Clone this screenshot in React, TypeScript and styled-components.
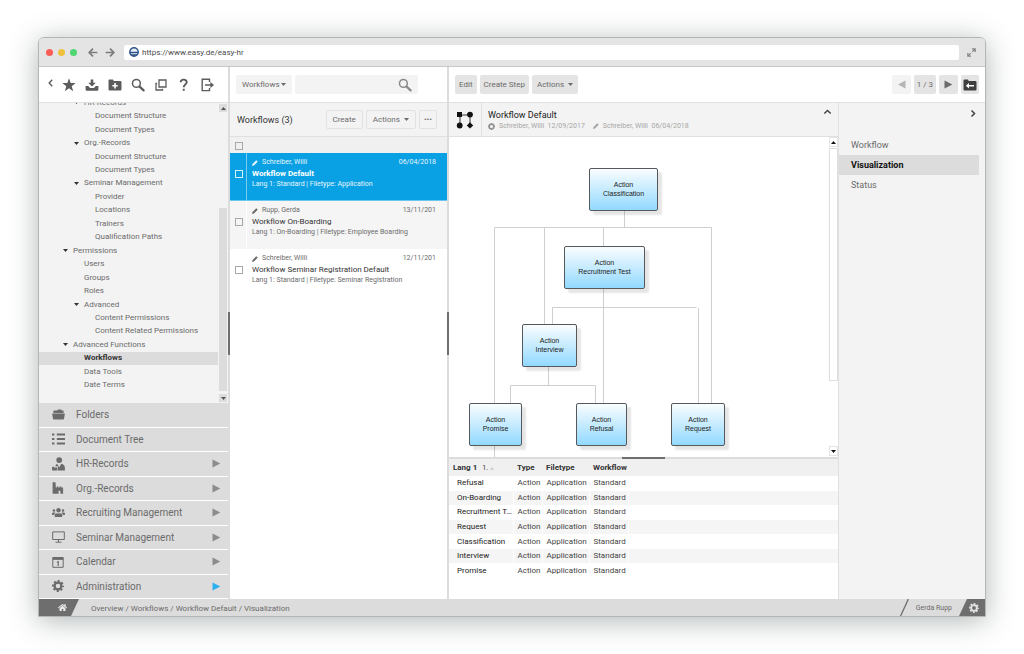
import React from "react";
import styled, { createGlobalStyle, css } from "styled-components";
import { FaUsers, FaHome } from "react-icons/fa";

const Global = createGlobalStyle`
  *, *::before, *::after { box-sizing: border-box; }
  body { margin: 0; background: #fff; color: #6b6b6b; font-family: Roboto, "Liberation Sans", sans-serif; font-size: 8px; }
  button, input, select { font: inherit; color: inherit; margin: 0; padding: 0; border: 0; background: none; border-radius: 0; }
  button, select { cursor: pointer; }
  ul { list-style: none; margin: 0; padding: 0; }
  h1, h2, p { margin: 0; font-weight: 400; }
  a { color: inherit; text-decoration: none; }
  svg { display: block; flex: none; }
`;

const c = {
  line: "#e0e0e0",
  panel: "#f3f3f3",
  grey: "#dcdcdc",
  dark: "#6e6e6e",
  icon: "#5c5c5c",
  blue: "#0aa1e4",
};

/* ---------- icons ---------- */

type IconProps = { size?: number };

const Gear = ({ size = 12 }: IconProps) => (
  <svg width={size} height={size} viewBox="0 0 12 12" fill="none" stroke="currentColor">
    <circle cx="6" cy="6" r="3.4" strokeWidth="2.200" />
    <circle cx="6" cy="6" r="5" strokeWidth="1.900" strokeDasharray="2.127 1.800" strokeDashoffset="1.060" />
  </svg>
);
const Star = () => (
  <svg width="14" height="14" viewBox="0 0 14 14" fill="currentColor">
    <path d="M7 .3l1.700 4.700 5 .1-4 3.100 1.500 5L7 10.300l-4.200 2.900 1.500-5-4-3.100 5-.1z" />
  </svg>
);
const Tray = () => (
  <svg width="14" height="14" viewBox="0 0 14 14" fill="currentColor">
    <path d="M5.700 1.500h2.600v3.300h2.500L7 8.600 3.200 4.800h2.500z" />
    <path d="M.6 8h2.600l1.900 2h3.800l1.900-2h2.600v3.600q0 1.200-1.200 1.200H1.800Q.6 12.800.6 11.600z" />
  </svg>
);
const FolderPlus = () => (
  <svg width="14" height="14" viewBox="0 0 14 14">
    <path d="M.5 2.500q0-.9.9-.9h3.200q.9 0 .9.9v.4h6.900q1.100 0 1.100 1v7.500q0 1-1 1H1.500q-1 0-1-1z" fill="currentColor" />
    <path d="M7 5v5.400M4.300 7.700h5.400" stroke="#fff" strokeWidth="1.600" />
  </svg>
);
const FolderBack = () => (
  <svg width="14" height="14" viewBox="0 0 14 14">
    <path d="M.5 2.500q0-.9.9-.9h3.200q.9 0 .9.9v.4h6.900q1.100 0 1.100 1v7.500q0 1-1 1H1.500q-1 0-1-1z" fill="#3f3f3f" />
    <path d="M2.800 7.700L6 5v1.900h5v1.600H6v1.900z" fill="#fff" />
  </svg>
);
const Magnifier = ({ size = 14 }: IconProps) => (
  <svg width={size} height={size} viewBox="0 0 14 14" fill="none" stroke="currentColor">
    <circle cx="5.400" cy="5.400" r="3.900" strokeWidth="1.500" />
    <path d="M8.400 8.400l4.200 4" strokeWidth="2.200" strokeLinecap="round" />
  </svg>
);
const Windows = () => (
  <svg width="14" height="14" viewBox="0 0 14 14" fill="none" stroke="currentColor" strokeWidth="1.300">
    <path d="M5 2h7v7H5z" />
    <path d="M3.200 5.500H2V12h6.500v-1.200" />
  </svg>
);
const Question = () => (
  <svg width="14" height="14" viewBox="0 0 14 14" fill="none" stroke="currentColor" strokeWidth="1.900">
    <path d="M3.600 4.300c.2-3.600 6.100-3.400 6.100 0C9.700 6.500 6.700 6.500 6.700 9.200" />
    <path d="M5.700 10.800h2v2h-2z" fill="currentColor" stroke="none" />
  </svg>
);
const Exit = () => (
  <svg width="14" height="14" viewBox="0 0 14 14" fill="none" stroke="currentColor" strokeWidth="1.400">
    <path d="M9.500 4V1.200H2.200v11.400h7.300V10" />
    <path d="M5 7h6" strokeWidth="1.700" />
    <path d="M10.400 4L14 7l-3.600 3z" fill="currentColor" stroke="none" />
  </svg>
);
const ChevronLeft = () => (
  <svg width="6" height="12" viewBox="0 0 6 12" fill="none" stroke="currentColor" strokeWidth="1.400"><path d="M5.200.8L2.200 4l3 3.200" /></svg>
);
const ChevronRight = () => (
  <svg width="6" height="9" viewBox="0 0 6 9" fill="none" stroke="currentColor" strokeWidth="1.500"><path d="M1.500 1.500l3 3-3 3" /></svg>
);
const ChevronUp = () => (
  <svg width="9" height="6" viewBox="0 0 9 6" fill="none" stroke="currentColor" strokeWidth="1.500"><path d="M1.300 4.500l3.200-3 3.200 3" /></svg>
);
const Arrow = ({ back }: { back?: boolean }) => (
  <svg width="10" height="9" viewBox="0 0 10 9" fill="none" stroke="#7c7c7c" strokeWidth="1.700">
    <path d={back ? "M9.400 4.500H1.500M5 .6L1.200 4.500 5 8.400" : "M.6 4.500h7.900M5 .6l3.800 3.900L5 8.400"} />
  </svg>
);
const Expand = () => (
  <svg width="9" height="9" viewBox="0 0 9 9" fill="none" stroke="#858585" strokeWidth="1.200"><path d="M5 .8h3.200V4M8.200.8L5.200 3.800M4 8.200H.8V5M.8 8.200l3-3" /></svg>
);
const SiteLogo = () => (
  <svg width="10" height="10" viewBox="0 0 10 10">
    <circle cx="5" cy="5" r="4.200" fill="#e8eef6" stroke="#2f5488" strokeWidth="1.400" />
    <path d="M.4 4.800h9.200v1.400H.4zM1.400 7.200h7.200A4.400 4.400 0 0 1 1.400 7.200z" fill="#2f5488" />
  </svg>
);
const Caret = ({ up, size = 5 }: { up?: boolean; size?: number }) => (
  <svg width={size} height="3" viewBox="0 0 5 3" fill="currentColor"><path d={up ? "M0 3L2.500 0 5 3z" : "M0 0h5L2.500 3z"} /></svg>
);
const Play = ({ back, size = 9 }: { back?: boolean; size?: number }) => (
  <svg width={size} height={size} viewBox="0 0 9 9" fill="currentColor"><path d={back ? "M8.500.5v8L1 4.500z" : "M.5.5v8L8.300 4.500z"} /></svg>
);
const Pencil = () => (
  <svg width="6" height="6" viewBox="0 0 6 6" fill="currentColor"><path d="M0 6l.5-1.900L4 .6q.4-.4.800 0l.6.600q.4.400 0 .8L1.900 5.500z" /></svg>
);
const FolderOpen = () => (
  <svg width="13" height="11" viewBox="0 0 13 11" fill="currentColor">
    <path d="M1.400 4V2q0-.6.6-.6h3L6 .5h3q.6 0 .7.700l.1.400h1.300q.5 0 .5.600V4z" />
    <path d="M.1 4.600h12.800l-.9 5.200q-.1.700-.8.700H1.800q-.7 0-.8-.7z" />
  </svg>
);
const ListIcon = () => (
  <svg width="13" height="12" viewBox="0 0 13 12" fill="currentColor">
    <path d="M0 .5h2.400v2H0zM0 5h2.400v2H0zM0 9.500h2.400v2H0zM4.800.5H13v2H4.800zM4.800 5H13v2H4.800zM4.800 9.500H13v2H4.800z" />
  </svg>
);
const PersonFile = () => (
  <svg width="13" height="14" viewBox="0 0 13 14" fill="currentColor">
    <circle cx="7.200" cy="3.100" r="2.900" />
    <path d="M5.200 6.800l2 3.600 2-3.600q3.700.8 3.700 4v2.700H5.800V9.300H3.200Q3.700 7.300 5.200 6.800z" />
    <path d="M.1 9.800h1.700l.5.700h2.900v3H.1z" />
  </svg>
);
const Factory = () => (
  <svg width="12" height="12" viewBox="0 0 12 12" fill="currentColor">
    <path d="M.6.2h2.900l.3 5.200h1V4.400h1.600v1h1.300v-1h1.500v1h1.900v6.400H8.400V8.800H6.600v3h-6z" />
  </svg>
);
const MonitorIcon = () => (
  <svg width="13" height="12" viewBox="0 0 13 12" fill="none" stroke="currentColor"><path d="M.7.900h11.600v7.600H.7zM6.500 8.500v2.500M3.500 11.200h6" /></svg>
);
const CalendarIcon = () => (
  <svg width="12" height="12" viewBox="0 0 12 12" fill="none" stroke="currentColor">
    <path d="M.8 1.500h10.400v9.800H.8z" />
    <path d="M.8 2.600h10.400" strokeWidth="2.600" />
    <path d="M4.900 6.300l1.300-.6v4.200" strokeWidth="1.200" />
  </svg>
);
const WorkflowIcon = () => (
  <svg width="18" height="18" viewBox="0 0 18 18" fill="#111">
    <path d="M4 4h10M4 4v10M14 4v10" stroke="#333" strokeWidth="1" />
    <path d="M1 1h5v5H1z" />
    <circle cx="14" cy="3.600" r="2.900" />
    <circle cx="3.700" cy="14.500" r="2.900" />
    <path d="M14 11.200l3.200 3.200-3.200 3.200-3.200-3.200z" />
  </svg>
);
const PlusDot = () => (
  <svg width="7" height="7" viewBox="0 0 7 7"><circle cx="3.500" cy="3.500" r="2.400" fill="none" stroke="#929292" strokeWidth="1.600" /><path d="M3.500 0v1.500M3.500 5.500V7M0 3.500h1.500M5.500 3.500H7" stroke="#929292" strokeWidth="1" /></svg>
);

/* ---------- frame ---------- */

const Page = styled.div`
  display: flex;
  min-height: 100vh;
  padding: 37px 38px;
`;
const Frame = styled.div`
  flex: 1;
  min-width: 0;
  display: flex;
  flex-direction: column;
  overflow: hidden;
  background: #fff;
  border: 1px solid #b3b5b5;
  border-radius: 6px 6px 0 0;
  box-shadow: 0 4px 28px rgba(70, 82, 82, 0.42);
`;
const TitleBar = styled.header`
  flex: none;
  display: flex;
  align-items: center;
  height: 29px;
  padding: 0 9px 0 7px;
  background: #e4e4e4;
  border-bottom: 1px solid #c8c8c8;
`;
const Dots = styled.div`
  display: flex;
  gap: 5px;
  margin-right: 11px;
`;
const Dot = styled.span<{ $color: string }>`
  width: 7px;
  height: 7px;
  border-radius: 50%;
  background: ${(p) => p.$color};
`;
const History = styled.div`
  display: flex;
  gap: 7px;
  margin-right: 9px;
`;
const Address = styled.label`
  flex: 1;
  display: flex;
  align-items: center;
  gap: 3px;
  height: 15px;
  padding: 0 5px;
  margin-right: 8px;
  border-radius: 2px;
  background: #fff;
`;
const AddressInput = styled.input`
  flex: 1;
  min-width: 0;
  color: #4a4a4a;
  outline: none;
`;
const IconButton = styled.button`
  display: inline-flex;
  align-items: center;
  justify-content: center;
  color: ${c.icon};
`;
const Columns = styled.div`
  flex: 1;
  min-height: 0;
  display: grid;
  grid-template-columns: 189px 2px 217px 2px minmax(0, 1fr);
`;
const Splitter = styled.div<{ $across?: boolean }>`
  display: flex;
  justify-content: center;
  align-items: center;
  background: ${c.grey};
  &::before {
    content: "";
    background: ${c.dark};
    width: ${(p) => (p.$across ? "43px" : "2px")};
    height: ${(p) => (p.$across ? "2px" : "43px")};
  }
`;
const Column = styled.section`
  display: flex;
  flex-direction: column;
  min-width: 0;
  min-height: 0;
  background: #fff;
`;
const Toolbar = styled.div<{ $gap?: number; $pad?: string }>`
  flex: none;
  display: flex;
  align-items: center;
  gap: ${(p) => p.$gap ?? 3}px;
  height: 36px;
  padding: ${(p) => p.$pad ?? "0 6px"};
  border-bottom: 1px solid ${c.line};
`;

/* ---------- sidebar ---------- */

const Tree = styled.div`
  flex: 1;
  min-height: 0;
  display: flex;
  overflow: hidden;
  background: ${c.panel};
`;
const TreeList = styled.ul`
  flex: 1;
  height: 296px;
  margin-top: -7px;
  display: grid;
  grid-auto-rows: 1fr;
`;
const TreeItem = styled.li<{ $level: number; $on?: boolean }>`
  display: flex;
  align-items: center;
  gap: 5px;
  padding-left: ${(p) => 24 + p.$level * 11}px;
  line-height: 12px;
  white-space: nowrap;
  ${(p) => p.$on && css`background: ${c.grey}; color: #333; font-weight: 700;`}
`;
const Twist = styled.span`
  width: 5px;
  color: #333;
`;
const TreeScroll = styled.div`
  flex: none;
  display: flex;
  flex-direction: column;
  justify-content: space-between;
  width: 10px;
  padding: 1px 1px;
`;
const ScrollButton = styled.button<{ $light?: boolean }>`
  display: flex;
  align-items: center;
  justify-content: center;
  height: ${(p) => (p.$light ? 10 : 8)}px;
  color: ${(p) => (p.$light ? "#111" : "#555")};
  background: ${(p) => (p.$light ? "#fff" : c.grey)};
  border: ${(p) => (p.$light ? "1px solid #e4e4e4" : "0")};
`;
const TreeThumb = styled.div`
  height: 183px;
  margin: auto 0 3px;
  background: ${c.grey};
`;
const Nav = styled.nav`
  flex: 0 0 196px;
  display: flex;
  flex-direction: column;
`;
const NavItem = styled.button<{ $on?: boolean }>`
  flex: 1;
  display: flex;
  align-items: center;
  padding: 0 7px 0 12px;
  background: ${c.grey};
  border-bottom: 1px solid #fff;
  font-size: 10px;
  text-align: left;
  & > svg:last-child { color: ${(p) => (p.$on ? "#2fb0ee" : "#8c8c8c")}; }
`;
const NavIcon = styled.span`
  display: flex;
  justify-content: center;
  width: 14px;
  margin-right: 11px;
`;
const NavLabel = styled.span`
  flex: 1;
`;

/* ---------- list ---------- */

const Scope = styled.label`
  position: relative;
  display: flex;
  align-items: center;
  color: #6b6b6b;
  & > svg { position: absolute; right: 6px; pointer-events: none; }
`;
const ScopeSelect = styled.select`
  appearance: none;
  width: 56px;
  height: 19px;
  padding: 0 6px;
  border-radius: 2px;
  background: ${c.panel};
`;
const Search = styled.label`
  display: flex;
  align-items: center;
  width: 123px;
  height: 19px;
  padding: 0 6px;
  border-radius: 2px;
  background: ${c.panel};
  color: #8a8a8a;
`;
const SearchInput = styled.input`
  flex: 1;
  min-width: 0;
  outline: none;
`;
const ListHead = styled.div`
  flex: none;
  display: flex;
  align-items: center;
  gap: 3px;
  height: 34px;
  padding: 0 10px 0 7px;
  background: ${c.panel};
  border-bottom: 1px solid ${c.line};
`;
const Heading = styled.h2`
  flex: 1;
  font-size: 9px;
  color: #333;
  white-space: nowrap;
`;
const Button = styled.button<{ $outline?: boolean; $faint?: boolean; $pad?: number }>`
  display: inline-flex;
  align-items: center;
  justify-content: center;
  gap: 4px;
  height: 19px;
  padding: 0 ${(p) => p.$pad ?? 5}px;
  border-radius: 2px;
  white-space: nowrap;
  background: ${(p) => (p.$outline || p.$faint ? c.panel : "#e4e4e4")};
  border: ${(p) => (p.$outline ? "1px solid #e2e2e2" : "0")};
  color: ${(p) => (p.$faint ? "#b4b4b4" : "#6b6b6b")};
`;
const SelectAll = styled.div`
  flex: none;
  display: flex;
  align-items: center;
  height: 16px;
  padding: 1px 5px 0;
  background: #f0f0f0;
`;
const Check = styled.input<{ $light?: boolean }>`
  appearance: none;
  flex: none;
  width: 8px;
  height: 8px;
  border: 1px solid ${(p) => (p.$light ? "#d5effb" : "#a8a8a8")};
`;
const Row = styled.li<{ $on?: boolean; $alt?: boolean }>`
  display: flex;
  min-height: 48px;
  font-size: 7px;
  line-height: 11px;
  background: ${(p) => (p.$on ? c.blue : p.$alt ? "#f5f5f5" : "#fff")};
  color: ${(p) => (p.$on ? "#e6f6fd" : "#6b6b6b")};
  border-bottom: 1px solid ${(p) => (p.$on ? "#6cc7ef" : "transparent")};
`;
const RowCheck = styled.div<{ $on?: boolean }>`
  flex: none;
  width: 17px;
  padding: 17px 0 0 5px;
  border-right: 1px solid ${(p) => (p.$on ? "#7accf1" : "#fff")};
`;
const RowBody = styled.div`
  flex: 1;
  min-width: 0;
  padding: 4px 11px 0 5px;
  white-space: nowrap;
`;
const RowMeta = styled.div`
  display: flex;
  align-items: center;
  gap: 4px;
  & > :last-child { margin-left: auto; }
`;
const RowTitle = styled.h2<{ $on?: boolean }>`
  font-size: 8px;
  color: ${(p) => (p.$on ? "#fff" : "#333")};
  font-weight: ${(p) => (p.$on ? 700 : 400)};
`;

/* ---------- detail ---------- */

const Spacer = styled.span`
  flex: 1;
`;
const Detail = styled.div`
  flex: 1;
  min-height: 0;
  display: flex;
`;
const Main = styled.div`
  flex: 1;
  min-width: 0;
  display: flex;
  flex-direction: column;
`;
const DetailHead = styled.div`
  flex: none;
  display: flex;
  height: 34px;
  background: ${c.panel};
  border-bottom: 1px solid ${c.line};
`;
const HeadIcon = styled.div`
  display: flex;
  align-items: center;
  justify-content: center;
  width: 33px;
  border-right: 1px solid ${c.line};
`;
const HeadText = styled.div`
  flex: 1;
  padding: 6px 6px 0;
`;
const HeadTitle = styled.h1`
  font-size: 9px;
  line-height: 12px;
  color: #222;
`;
const HeadMeta = styled.p`
  display: flex;
  align-items: center;
  gap: 4px;
  font-size: 7px;
  line-height: 10px;
  color: #a6a6a6;
  & > span { margin-right: 4px; }
`;
const HeadToggle = styled(IconButton)`
  align-self: flex-start;
  padding: 6px;
  color: #444;
`;
const Canvas = styled.div`
  position: relative;
  flex: 1;
  min-height: 320px;
  overflow: hidden;
  display: flex;
  justify-content: flex-end;
`;
const Edges = styled.svg`
  position: absolute;
  left: 0;
  top: 0;
`;
const Node = styled.div<{ $x: number; $y: number; $w: number }>`
  position: absolute;
  left: ${(p) => p.$x}px;
  top: ${(p) => p.$y}px;
  width: ${(p) => p.$w}px;
  height: 43px;
  display: flex;
  flex-direction: column;
  justify-content: center;
  padding-bottom: 2px;
  text-align: center;
  font: 7px/9px "Liberation Sans", Arial, sans-serif;
  color: #222;
  background: linear-gradient(#fafdff, #92d9ff);
  border: 1px solid #55595c;
  border-radius: 2px;
  box-shadow: 4px 4px 2px rgba(0, 0, 0, 0.1);
`;
const CanvasScroll = styled.div`
  display: flex;
  flex-direction: column;
  width: 9px;
  padding-bottom: 1px;
`;
const CanvasThumb = styled.div`
  height: 233px;
  margin: 1px 0 auto;
  background: #fff;
  border: 1px solid #dedede;
`;
const Steps = styled.table`
  flex: none;
  width: 100%;
  height: 119px;
  margin-bottom: 21px;
  border-collapse: collapse;
  table-layout: fixed;
  line-height: 12px;
  color: #444;
  th { height: 17px; padding: 1px 0 0 4px; text-align: left; color: #333; font-weight: 700; background: #f0f0f0; }
  td { padding: 0 0 0 4px; }
  th, td { white-space: nowrap; }
  td:first-child { padding-left: 8px; color: #222; overflow: hidden; text-overflow: ellipsis; }
  tbody tr:nth-child(even) td { background: #f5f5f5; }
  tbody td:not(:last-child) { border-right: 1px solid #fff; }
`;
const Sort = styled.small`
  display: inline-flex;
  align-items: center;
  gap: 2px;
  margin-left: 3px;
  font-size: 7px;
  font-weight: 400;
  & > svg { color: #c8c8c8; }
`;
const Aside = styled.aside`
  flex: 0 0 147px;
  padding: 0 6px 0 0;
  background: ${c.panel};
  border-left: 1px solid ${c.line};
`;
const AsideTop = styled.div`
  display: flex;
  justify-content: flex-end;
  height: 32px;
  padding-right: 3px;
  & > button { height: 21px; color: #444; }
`;
const Tab = styled.a<{ $on?: boolean }>`
  display: block;
  height: 20px;
  padding-left: 12px;
  font-size: 9px;
  line-height: 20px;
  ${(p) => p.$on && css`background: ${c.grey}; color: #111; font-weight: 700;`}
`;

/* ---------- footer ---------- */

const Footer = styled.footer`
  flex: none;
  display: flex;
  height: 17px;
  background: ${c.grey};
  line-height: 19px;
`;
const HomeLink = styled.a`
  display: flex;
  align-items: center;
  justify-content: center;
  width: 40px;
  padding-left: 6px;
  color: #e8e8e8;
  background: ${c.dark};
  clip-path: polygon(0 0, 100% 0, 32px 100%, 0 100%);
`;
const Crumbs = styled.nav`
  flex: 1;
  display: flex;
  gap: 2px;
  padding-left: 12px;
`;
const Slant = styled.svg`
  margin-right: 7px;
`;
const User = styled.span`
  font-size: 7px;
`;
const Settings = styled.button`
  display: flex;
  align-items: center;
  justify-content: center;
  width: 26px;
  margin-left: 7px;
  padding-left: 4px;
  color: #e4e4e4;
  background: ${c.dark};
  clip-path: polygon(8px 0, 100% 0, 100% 100%, 0 100%);
`;

/* ---------- data ---------- */

const tree: [string, number, boolean?][] = [
  ["HR-Records", 1, true],
  ["Document Structure", 2],
  ["Document Types", 2],
  ["Org.-Records", 1, true],
  ["Document Structure", 2],
  ["Document Types", 2],
  ["Seminar Management", 1, true],
  ["Provider", 2],
  ["Locations", 2],
  ["Trainers", 2],
  ["Qualification Paths", 2],
  ["Permissions", 0, true],
  ["Users", 1],
  ["Groups", 1],
  ["Roles", 1],
  ["Advanced", 1, true],
  ["Content Permissions", 2],
  ["Content Related Permissions", 2],
  ["Advanced Functions", 0, true],
  ["Workflows", 1],
  ["Data Tools", 1],
  ["Date Terms", 1],
];

const nav: [string, React.ReactNode, boolean][] = [
  ["Folders", <FolderOpen />, false],
  ["Document Tree", <ListIcon />, false],
  ["HR-Records", <PersonFile />, true],
  ["Org.-Records", <Factory />, true],
  ["Recruiting Management", <FaUsers size={13} />, true],
  ["Seminar Management", <MonitorIcon />, true],
  ["Calendar", <CalendarIcon />, true],
  ["Administration", <Gear size={12} />, true],
];

const workflows = [
  { by: "Schreiber, Willi", date: "06/04/2018", title: "Workflow Default", info: "Lang 1: Standard  |  Filetype: Application" },
  { by: "Rupp, Gerda", date: "13/11/201", title: "Workflow On-Boarding", info: "Lang 1: On-Boarding |  Filetype: Employee Boarding" },
  { by: "Schreiber, Willi", date: "12/11/201", title: "Workflow Seminar Registration Default", info: "Lang 1: Standard  |  Filetype: Seminar Registration" },
];

const nodes: [string, number, number, number][] = [
  ["Classification", 140, 31, 69],
  ["Recruitment Test", 115, 109, 81],
  ["Interview", 73, 187, 55],
  ["Promise", 20, 266, 53],
  ["Refusal", 127, 266, 51],
  ["Request", 222, 266, 54],
];

const steps = ["Refusal", "On-Boarding", "Recruitment Test", "Request", "Classification", "Interview", "Promise"];

const tools: [string, React.ReactNode][] = [
  ["Favourites", <Star />],
  ["Import", <Tray />],
  ["New folder", <FolderPlus />],
  ["Search", <Magnifier />],
  ["Windows", <Windows />],
  ["Help", <Question />],
  ["Log out", <Exit />],
];

export default function App() {
  return (
    <Page>
      <Global />
      <Frame>
        <TitleBar>
          <Dots>
            <Dot $color="#fb5d57" />
            <Dot $color="#eec13f" />
            <Dot $color="#4fd673" />
          </Dots>
          <History>
            <IconButton aria-label="Back"><Arrow back /></IconButton>
            <IconButton aria-label="Forward"><Arrow /></IconButton>
          </History>
          <Address>
            <SiteLogo />
            <AddressInput aria-label="Address" defaultValue="https://www.easy.de/easy-hr" />
          </Address>
          <IconButton aria-label="Full screen"><Expand /></IconButton>
        </TitleBar>

        <Columns>
          <Column>
            <Toolbar $gap={9} $pad="0 13px 0 8px">
              <IconButton aria-label="Collapse"><ChevronLeft /></IconButton>
              {tools.map(([name, icon]) => (
                <IconButton key={name} aria-label={name}>{icon}</IconButton>
              ))}
            </Toolbar>
            <Tree>
              <TreeList>
                {tree.map(([label, level, open], i) => (
                  <TreeItem key={i} $level={level} $on={label === "Workflows"}>
                    <Twist>{open && <Caret />}</Twist>
                    <a href="#tree">{label}</a>
                  </TreeItem>
                ))}
              </TreeList>
              <TreeScroll>
                <ScrollButton aria-label="Scroll up"><Caret up /></ScrollButton>
                <TreeThumb />
                <ScrollButton aria-label="Scroll down"><Caret /></ScrollButton>
              </TreeScroll>
            </Tree>
            <Nav>
              {nav.map(([label, icon, more]) => (
                <NavItem key={label} $on={label === "Administration"}>
                  <NavIcon>{icon}</NavIcon>
                  <NavLabel>{label}</NavLabel>
                  {more && <Play />}
                </NavItem>
              ))}
            </Nav>
          </Column>

          <Splitter />

          <Column>
            <Toolbar>
              <Scope>
                <ScopeSelect aria-label="Search in"><option>Workflows</option></ScopeSelect>
                <Caret />
              </Scope>
              <Search>
                <SearchInput aria-label="Search" />
                <Magnifier />
              </Search>
            </Toolbar>
            <ListHead>
              <Heading>Workflows (3)</Heading>
              <Button $outline $pad={6}>Create</Button>
              <Button $outline $pad={6}>Actions <Caret /></Button>
              <Button $outline $pad={4} aria-label="More">•••</Button>
            </ListHead>
            <SelectAll><Check type="checkbox" aria-label="Select all" /></SelectAll>
            <ul>
              {workflows.map((w, i) => (
                <Row key={w.title} $on={i === 0} $alt={i === 1}>
                  <RowCheck $on={i === 0}><Check type="checkbox" $light={i === 0} aria-label={w.title} /></RowCheck>
                  <RowBody>
                    <RowMeta><Pencil /><span>{w.by}</span><span>{w.date}</span></RowMeta>
                    <RowTitle $on={i === 0}>{w.title}</RowTitle>
                    <p>{w.info}</p>
                  </RowBody>
                </Row>
              ))}
            </ul>
          </Column>

          <Splitter />

          <Column>
            <Toolbar>
              <Button $pad={4}>Edit</Button>
              <Button $pad={4}>Create Step</Button>
              <Button>Actions <Caret /></Button>
              <Spacer />
              <Button $faint aria-label="Previous"><Play back /></Button>
              <Button $pad={3}>1 / 3</Button>
              <Button aria-label="Next"><Play /></Button>
              <Button $pad={2} aria-label="Back to folder"><FolderBack /></Button>
            </Toolbar>
            <Detail>
              <Main>
                <DetailHead>
                  <HeadIcon><WorkflowIcon /></HeadIcon>
                  <HeadText>
                    <HeadTitle>Workflow Default</HeadTitle>
                    <HeadMeta>
                      <PlusDot /><span>Schreiber, Willi&nbsp; 12/09/2017</span>
                      <Pencil /><span>Schreiber, Willi&nbsp; 06/04/2018</span>
                    </HeadMeta>
                  </HeadText>
                  <HeadToggle aria-label="Collapse header"><ChevronUp /></HeadToggle>
                </DetailHead>
                <Canvas>
                  <Edges width="380" height="320" viewBox="0 0 380 320" fill="none" stroke="#cfcfcf">
                    <path d="M175.500 74V90.500M45.500 266V90.500H262.500V266M95.500 90V187M154.500 90V109M154.500 152V266" />
                    <path d="M103.500 187V170.500H247.500M249.500 171V266M99.500 230V248.500M61.500 266V248.500H146.500V266M45.500 309V320" />
                  </Edges>
                  {nodes.map(([name, x, y, w]) => (
                    <Node key={name} $x={x} $y={y} $w={w}><span>Action</span><span>{name}</span></Node>
                  ))}
                  <CanvasScroll>
                    <ScrollButton $light aria-label="Scroll up"><Caret up /></ScrollButton>
                    <CanvasThumb />
                    <ScrollButton $light aria-label="Scroll down"><Caret /></ScrollButton>
                  </CanvasScroll>
                </Canvas>
                <Splitter $across />
                <Steps>
                  <colgroup>
                    <col width="64" /><col width="29" /><col width="47" /><col width="39" /><col />
                  </colgroup>
                  <thead>
                    <tr><th>Lang 1 <Sort>1. <Caret up size={4} /></Sort></th><th>Type</th><th>Filetype</th><th colSpan={2}>Workflow</th></tr>
                  </thead>
                  <tbody>
                    {steps.map((s) => (
                      <tr key={s}><td>{s}</td><td>Action</td><td>Application</td><td>Standard</td><td /></tr>
                    ))}
                  </tbody>
                </Steps>
              </Main>
              <Aside>
                <AsideTop><IconButton aria-label="Collapse panel"><ChevronRight /></IconButton></AsideTop>
                <Tab href="#workflow">Workflow</Tab>
                <Tab href="#visualization" $on>Visualization</Tab>
                <Tab href="#status">Status</Tab>
              </Aside>
            </Detail>
          </Column>
        </Columns>

        <Footer>
          <HomeLink href="#home" aria-label="Home"><FaHome size={9} /></HomeLink>
          <Crumbs>
            <a href="#overview">Overview</a><span>/</span>
            <a href="#workflows">Workflows</a><span>/</span>
            <a href="#default">Workflow Default</a><span>/</span>
            <a href="#visualization">Visualization</a>
          </Crumbs>
          <Slant width="9" height="17" viewBox="0 0 9 17" stroke="#6e6e6e" strokeWidth="1.300"><path d="M.6 17L8.400 0" /></Slant>
          <User>Gerda Rupp</User>
          <Settings aria-label="Settings"><Gear size={10} /></Settings>
        </Footer>
      </Frame>
    </Page>
  );
}
